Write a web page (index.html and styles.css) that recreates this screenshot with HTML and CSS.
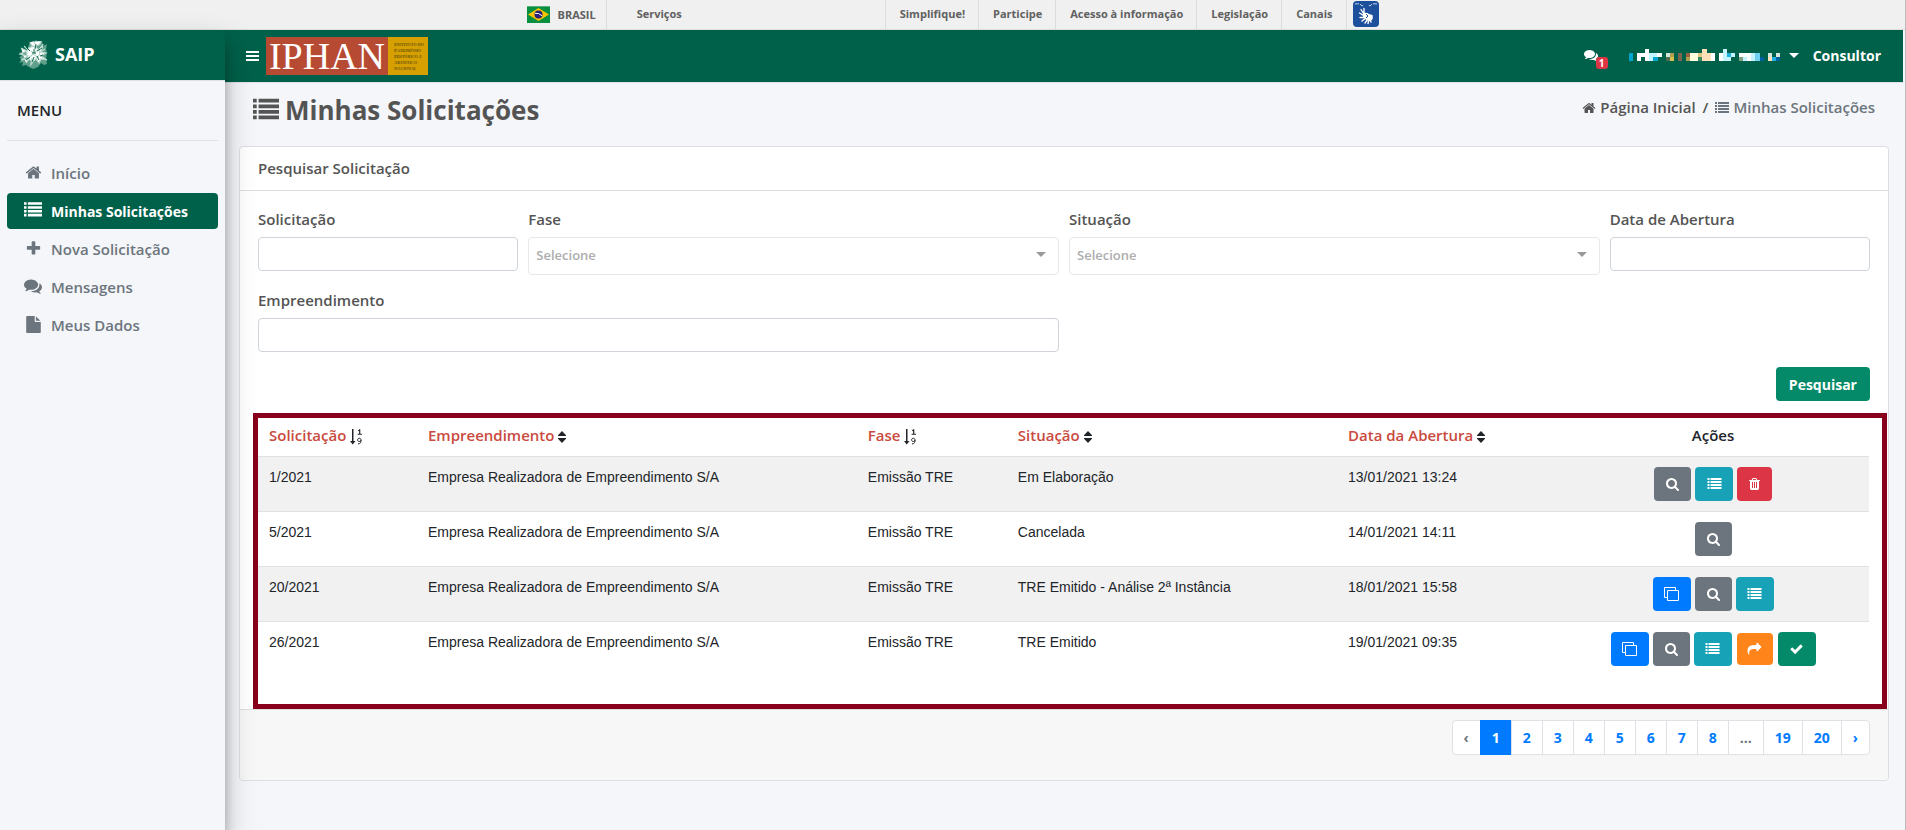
FILE: index.html
```html
<!DOCTYPE html>
<html lang="pt-BR">
<head>
<meta charset="utf-8">
<title>SAIP - Minhas Solicitações</title>
<link rel="stylesheet" href="styles.css">
</head>
<body>
<svg class="sprite" aria-hidden="true">
  <symbol id="i-list" viewBox="0 0 1792 1792"><path d="M0 1280h256v256H0zM0 896h256v256H0zM0 512h256v256H0zM0 128h256v256H0zM384 1280h1408v256H384zM384 896h1408v256H384zM384 512h1408v256H384zM384 128h1408v256H384z"/></symbol>
  <symbol id="i-home" viewBox="0 0 1792 1792"><path d="M1472 992v480q0 26-19 45t-45 19h-384v-384h-256v384h-384q-26 0-45-19t-19-45v-480q0-1 .5-3t.5-3l575-474 575 474q1 2 1 6zm223-69l-62 74q-8 9-21 11h-3q-13 0-21-7l-692-577-692 577q-12 8-24 7-13-2-21-11l-62-74q-8-10-7-23.500t11-21.500l719-599q32-26 76-26t76 26l244 204v-195q0-14 9-23t23-9h192q14 0 23 9t9 23v408l219 182q10 8 11 21.500t-7 23.500z"/></symbol>
  <symbol id="i-plus" viewBox="0 0 1792 1792"><path d="M1600 736v192q0 40-28 68t-68 28h-416v416q0 40-28 68t-68 28h-192q-40 0-68-28t-28-68v-416h-416q-40 0-68-28t-28-68v-192q0-40 28-68t68-28h416v-416q0-40 28-68t68-28h192q40 0 68 28t28 68v416h416q40 0 68 28t28 68z"/></symbol>
  <symbol id="i-comments" viewBox="0 0 1792 1792"><path d="M1408 768q0 139-94 257t-256.500 186.500-353.500 68.500q-86 0-176-16-124 88-278 128-36 9-86 16h-3q-11 0-20.500-8t-11.500-21q-1-3-1-6.500t.5-6.500 2-6l2.500-5 3.500-5.500 4-5 4.500-5 4-4.500q5-6 23-25t26-29.500 22.500-29 25-38.500 20.500-44q-124-72-195-177t-71-224q0-139 94-257t256.500-186.500 353.500-68.500 353.500 68.500 256.500 186.500 94 257zm384 256q0 120-71 224.500t-195 176.500q10 24 20.500 44t25 38.500 22.500 29 26 29.500 23 25q1 1 4 4.500t4.500 5 4 5 3.500 5.500l2.500 5 2 6 .5 6.500-1 6.500q-3 14-13 22t-22 7q-50-7-86-16-154-40-278-128-90 16-176 16-271 0-472-132 58 4 88 4 161 0 309-45t264-129q125-92 192-212t67-254q0-77-23-152 129 71 204 178t75 230z"/></symbol>
  <symbol id="i-file" viewBox="0 0 1792 1792"><path d="M1152 512v-472q22 14 36 28l408 408q14 14 28 36h-472zm-128 32q0 40 28 68t68 28h544v1056q0 40-28 68t-68 28h-1344q-40 0-68-28t-28-68v-1600q0-40 28-68t68-28h800v544z"/></symbol>
  <symbol id="i-search" viewBox="0 0 1792 1792"><path d="M1216 832q0-185-131.500-316.500t-316.500-131.500-316.500 131.500-131.500 316.500 131.500 316.500 316.500 131.500 316.500-131.500 131.500-316.500zm512 832q0 52-38 90t-90 38q-54 0-90-38l-343-342q-179 124-399 124-143 0-273.500-55.500t-225-150-150-225-55.500-273.500 55.500-273.500 150-225 225-150 273.500-55.500 273.500 55.500 225 150 150 225 55.500 273.500q0 220-124 399l343 343q37 37 37 90z"/></symbol>
  <symbol id="i-trash" viewBox="0 0 1792 1792"><path d="M704 1376v-704q0-14-9-23t-23-9h-64q-14 0-23 9t-9 23v704q0 14 9 23t23 9h64q14 0 23-9t9-23zm256 0v-704q0-14-9-23t-23-9h-64q-14 0-23 9t-9 23v704q0 14 9 23t23 9h64q14 0 23-9t9-23zm256 0v-704q0-14-9-23t-23-9h-64q-14 0-23 9t-9 23v704q0 14 9 23t23 9h64q14 0 23-9t9-23zm-544-992h448l-48-117q-7-9-17-11h-317q-10 2-17 11zm928 32v64q0 14-9 23t-23 9h-96v948q0 83-47 143.500t-113 60.500h-832q-66 0-113-58.500t-47-141.500v-952h-96q-14 0-23-9t-9-23v-64q0-14 9-23t23-9h309l70-167q15-37 54-63t79-26h320q40 0 79 26t54 63l70 167h309q14 0 23 9t9 23z"/></symbol>
  <symbol id="i-check" viewBox="0 0 1792 1792"><path d="M1671 566q0 40-28 68l-724 724-136 136q-28 28-68 28t-68-28l-136-136-362-362q-28-28-28-68t28-68l136-136q28-28 68-28t68 28l294 295 656-657q28-28 68-28t68 28l136 136q28 28 28 68z"/></symbol>
  <symbol id="i-share" viewBox="0 0 1792 1792"><path d="M1792 640q0 26-19 45l-512 512q-19 19-45 19t-45-19-19-45v-256h-224q-98 0-175.500 6t-154 21.500-133 42.500-105.500 69.500-80 101-48.500 138.500-17.500 181q0 55 5 123 0 6 2.500 23.500t2.500 26.500q0 15-8.500 25t-23.500 10q-16 0-28-17-7-9-13-22t-13.500-30-10.500-24q-127-285-127-451 0-199 53-333 162-403 875-403h224v-256q0-26 19-45t45-19 45 19l512 512q19 19 19 45z"/></symbol>
  <symbol id="i-copy" viewBox="0 0 15 14"><path d="M3 10.500H.5V.5h11V3M3.500 3.500h11v10h-11z" fill="none" stroke="currentColor"/></symbol>
  <symbol id="i-sort" viewBox="0 0 8 12"><path d="M4 0l4 4.200v.8H0v-.8zM4 12l4-4.200V7H0v.8z"/></symbol>
  <symbol id="i-sortnum" viewBox="0 0 12 16"><path d="M2 0h1.500v12H5.500L2.700 15.500 0 12h2zM8 1.400L9.300.3h1v4.400H12v1H7.600v-1h1.500V1.700l-1 .6z"/><path d="M11 11.200a1.700 1.700 0 1 1 0-.6c.3 2.600-.6 4.400-3 4.300" fill="none" stroke="currentColor"/></symbol>
</svg>

<header class="gov">
  <nav class="gov-inner" aria-label="Portal do governo">
    <a class="gov-brasil" href="#"><svg width="23" height="17" viewBox="0 0 23 17"><path fill="#089040" d="M0 0h23v17H0z"/><path fill="#52b27a" d="M0 0h23v1H0z"/><path fill="#f8c300" d="M11.500 2L22 8.500 11.500 15 1 8.500z"/><circle cx="11.500" cy="8.500" r="4" fill="#2b2278"/><path d="M8 7.300q4-.6 7 2.500" fill="none" stroke="#fff"/></svg>BRASIL</a>
    <a class="gov-serv" href="#">Serviços</a>
    <a href="#">Simplifique!</a>
    <a href="#">Participe</a>
    <a href="#">Acesso à informação</a>
    <a href="#">Legislação</a>
    <a href="#">Canais</a>
    <button class="libras" aria-label="Acessível em Libras"><svg width="26" height="26" viewBox="0 0 26 26"><rect width="26" height="26" rx="4" fill="#1c4f9c"/><path d="M2 3q5-1 7 2l2-1M24 3q-5-1-7 2l-2-1" fill="none" stroke="#c8d8ef" stroke-dasharray="4 1"/><path d="M8 8.500l2.500 4M6.500 12l4 2.500M7 16.500h4M11 7.500v5M9 20l4-3M12 22l3-4M15 22.500l1-4M18 21l-1-3" stroke="#fff" stroke-width="1.400" stroke-linecap="round"/><path d="M10 12q4-1 6 1l3.500 1q1 3-.5 5-3 2-7-1-3-2-2-6z" fill="#fff"/><path d="M13 13l2 2-2 2" stroke="#1c4f9c" fill="none"/></svg></button>
  </nav>
</header>

<div class="app">
  <aside class="side">
    <a class="brand" href="#">
      <svg width="30" height="30" viewBox="0 0 30 30" fill="none" stroke="#b9d8cd"><path fill="#5f9f8b" stroke="none" d="M12 3l3 2 3-4 3 3 3-2 1 5 4-2-1 5 1 4-1 5 1 6-3 1-3-2-3 4-5 2-4-2-3-2-4 1 1-4-4 1 3-4-3-1 3-3-3-3 5 1-2-4 5 1z"/><path stroke-width="1.200" d="M12 3q1 5 6 4t5-5M3 9l6 3-7 3 8 2-7 4 8-1-3 4M25 5l-2 8 5 1-5 3 6 4-6-1-2 4-3-4-5 4 1-5M11 9q5-3 9 1t-1 9-8 1-2-8zM13 12l6 6M19 11l-7 7M15 2l2 3M6 7l3 3M27 10l-3 2M12 27l3-4"/><path stroke="#146b50" d="M8 8l4 4M18 5l-1 5M24 9l-5 3M8 21l4-3M21 21l-2-4M14 23l2-5M14 14h4M16 10v4M25 16l-3 1"/></svg>
      <span>SAIP</span>
    </a>
    <div class="menu-title">MENU</div>
    <nav class="menu" aria-label="Menu">
      <a href="#"><svg class="ic16"><use href="#i-home"/></svg>Início</a>
      <a href="#" class="active"><svg class="ic18"><use href="#i-list"/></svg>Minhas Solicitações</a>
      <a href="#"><svg class="ic16"><use href="#i-plus"/></svg>Nova Solicitação</a>
      <a href="#"><svg class="ic18"><use href="#i-comments"/></svg>Mensagens</a>
      <a href="#"><svg class="ic16"><use href="#i-file"/></svg>Meus Dados</a>
    </nav>
  </aside>

  <div class="main">
    <header class="topbar">
      <button class="burger" aria-label="Abrir menu"><svg width="13" height="10" viewBox="0 0 13 10"><path fill="#fff" d="M0 0h13v2H0zM0 4h13v2H0zM0 8h13v2H0z"/></svg></button>
      <a class="iphan" href="#"><span class="iphan-name">IPHAN</span><span class="iphan-full">Instituto do<br>Patrimônio<br>Histórico e<br>Artístico<br>Nacional</span></a>
      <div class="user">
        <a class="msgs" href="#" aria-label="Mensagens"><svg class="ic14"><use href="#i-comments"/></svg><span class="badge">1</span></a>
        <button class="usermenu" aria-label="Menu do usuário">
          <svg width="152" height="12" viewBox="0 0 152 12" shape-rendering="crispEdges"><path fill="#00a5d0" d="M0 4h4v8H0zM24 8h5v4h-5z"/><path fill="#fff" d="M8 4h4v8H8zM12 4h4v4h-4zM16 0h4v12h-4zM28 4h5v4h-5zM82 4h4v8h-4zM90 4h4v8h-4zM110 4h8v4h-8zM118 4h4v8h-4z"/><path fill="#c4f4ff" d="M20 4h4v8h-4zM24 4h4v4h-4zM94 0h4v12h-4zM98 8h4v4h-4zM102 4h4v4h-4zM114 8h4v4h-4zM122 4h4v8h-4z"/><path fill="#d8e4de" d="M37 4h4v4h-4zM139 4h4v4h-4zM147 4h4v4h-4z"/><path fill="#4f6b50" d="M37 8h4v4h-4z"/><path fill="#b0a050" d="M41 4h4v4h-4zM57 8h4v4h-4z"/><path fill="#d8c050" d="M41 8h4v4h-4z"/><path fill="#7a6550" d="M49 4h4v8h-4z"/><path fill="#a06040" d="M57 4h4v4h-4z"/><path fill="#ffffe0" d="M61 4h8v8h-8z"/><path fill="#e0c880" d="M69 4h4v4h-4z"/><path fill="#3a8a60" d="M69 8h4v4h-4z"/><path fill="#ffe0b8" d="M73 0h5v12h-5zM78 4h4v8h-4zM139 8h4v4h-4z"/><path fill="#20b0e0" d="M98 4h4v4h-4zM143 8h4v4h-4z"/><path fill="#80a080" d="M110 8h4v4h-4z"/><path fill="#70d0f0" d="M126 4h5v8h-5z"/><path fill="#005f9f" d="M131 8h4v4h-4zM147 8h4v4h-4z"/></svg>
          <span class="caret"></span>
        </button>
        <span>Consultor</span>
      </div>
    </header>

    <div class="pagehead">
      <h1><svg class="ic26"><use href="#i-list"/></svg>Minhas Solicitações</h1>
      <nav class="crumbs" aria-label="Trilha">
        <a href="#"><svg class="ic14"><use href="#i-home"/></svg>Página Inicial</a><span>/</span><span class="here"><svg class="ic14"><use href="#i-list"/></svg>Minhas Solicitações</span>
      </nav>
    </div>

    <section class="card">
      <h2>Pesquisar Solicitação</h2>
      <div class="body">
        <form>
          <div class="c2"><label for="f1">Solicitação</label><input id="f1" type="text"></div>
          <div class="c4"><label for="f2">Fase</label><div class="sel"><select id="f2"><option>Selecione</option></select></div></div>
          <div class="c4"><label for="f3">Situação</label><div class="sel"><select id="f3"><option>Selecione</option></select></div></div>
          <div class="c2"><label for="f4">Data de Abertura</label><input id="f4" type="text"></div>
          <div class="c6"><label for="f5">Empreendimento</label><input id="f5" type="text"></div>
          <div class="submit"><button type="button">Pesquisar</button></div>
        </form>
        <div class="frame">
          <table>
            <colgroup><col class="k1"><col class="k2"><col class="k3"><col class="k4"><col class="k5"><col class="k6"></colgroup>
            <thead><tr>
              <th><a href="#">Solicitação</a><svg class="sn"><use href="#i-sortnum"/></svg></th>
              <th><a href="#">Empreendimento</a><svg class="so"><use href="#i-sort"/></svg></th>
              <th><a href="#">Fase</a><svg class="sn"><use href="#i-sortnum"/></svg></th>
              <th><a href="#">Situação</a><svg class="so"><use href="#i-sort"/></svg></th>
              <th><a href="#">Data da Abertura</a><svg class="so"><use href="#i-sort"/></svg></th>
              <th class="mid">Ações</th>
            </tr></thead>
            <tbody>
              <tr><td>1/2021</td><td>Empresa Realizadora de Empreendimento S/A</td><td>Emissão TRE</td><td>Em Elaboração</td><td>13/01/2021 13:24</td>
                <td><div class="acts"><button class="grey" aria-label="Visualizar"><svg><use href="#i-search"/></svg></button><button class="teal" aria-label="Detalhes"><svg><use href="#i-list"/></svg></button><button class="red" aria-label="Excluir"><svg><use href="#i-trash"/></svg></button></div></td></tr>
              <tr><td>5/2021</td><td>Empresa Realizadora de Empreendimento S/A</td><td>Emissão TRE</td><td>Cancelada</td><td>14/01/2021 14:11</td>
                <td><div class="acts"><button class="grey" aria-label="Visualizar"><svg><use href="#i-search"/></svg></button></div></td></tr>
              <tr><td>20/2021</td><td>Empresa Realizadora de Empreendimento S/A</td><td>Emissão TRE</td><td>TRE Emitido - Análise 2ª Instância</td><td>18/01/2021 15:58</td>
                <td><div class="acts"><button class="blue" aria-label="Copiar"><svg><use href="#i-copy"/></svg></button><button class="grey" aria-label="Visualizar"><svg><use href="#i-search"/></svg></button><button class="teal" aria-label="Detalhes"><svg><use href="#i-list"/></svg></button></div></td></tr>
              <tr><td>26/2021</td><td>Empresa Realizadora de Empreendimento S/A</td><td>Emissão TRE</td><td>TRE Emitido</td><td>19/01/2021 09:35</td>
                <td><div class="acts"><button class="blue" aria-label="Copiar"><svg><use href="#i-copy"/></svg></button><button class="grey" aria-label="Visualizar"><svg><use href="#i-search"/></svg></button><button class="teal" aria-label="Detalhes"><svg><use href="#i-list"/></svg></button><button class="orange" aria-label="Encaminhar"><svg><use href="#i-share"/></svg></button><button class="green" aria-label="Confirmar"><svg><use href="#i-check"/></svg></button></div></td></tr>
            </tbody>
          </table>
        </div>
      </div>
      <footer class="foot">
        <nav class="pages" aria-label="Paginação"><span>‹</span><a class="on" href="#">1</a><a href="#">2</a><a href="#">3</a><a href="#">4</a><a href="#">5</a><a href="#">6</a><a href="#">7</a><a href="#">8</a><span>...</span><a href="#">19</a><a href="#">20</a><a href="#">›</a></nav>
      </footer>
    </section>
  </div>
</div>
</body>
</html>
```

FILE: styles.css
```css
* { box-sizing: border-box; }
html { height: 100%; }
body {
  margin: 0;
  min-height: 100%;
  display: flex;
  flex-direction: column;
  padding-right: 2px;
  border-right: 1px solid #bcbcbc;
  background: #f4f6f9;
  color: #212529;
  font: 600 15px/21px "Open Sans", "Noto Sans", sans-serif;
}
a { color: inherit; text-decoration: none; }
button { border: 0; padding: 0; margin: 0; font: inherit; color: inherit; background: none; }
svg { fill: currentColor; flex: none; }
.sprite { position: absolute; width: 0; height: 0; }
.ic14 { width: 14px; height: 14px; }
.ic16 { width: 17px; height: 17px; }
.ic18 { width: 18px; height: 18px; }
.ic26 { width: 26px; height: 26px; }

.gov { height: 30px; background: #f0f0f0; border-bottom: 1px solid #dcdcdc; color: #606060; font-size: 11px; font-weight: 700; margin-right: -2px; }
.gov-inner { display: flex; width: 852px; height: 29px; margin: 0 auto; }
.gov-inner a { display: flex; align-items: center; padding: 0 13px 2px 14px; border-left: 1px solid #dcdcdc; }
.gov-inner .gov-brasil { gap: 8px; padding: 0 10px 0 0; border: 0; }
.gov-inner .gov-serv { flex: 1; padding-left: 30px; }
.libras { display: flex; padding: 1px 0 0 6px; border-left: 1px solid #dcdcdc; }

.app { flex: 1; display: flex; }
.side {
  position: relative;
  z-index: 2;
  width: 225px;
  flex: none;
  background: #f4f6f9;
  box-shadow: 0 14px 28px rgba(0, 0, 0, .25), 0 10px 10px rgba(0, 0, 0, .22);
}
.brand { display: flex; align-items: center; gap: 7px; height: 51px; padding: 0 0 2px 18px; background: #00614a; border-bottom: 1px solid #dee2e6; color: #fff; font-size: 18px; font-weight: 700; }
.menu-title { margin: 0 7px 14px; padding: 19px 10px 19px; border-bottom: 1px solid #dee2e6; }
.menu { display: flex; flex-direction: column; gap: 2px; padding: 0 7px; color: #6c757d; }
.menu a { display: grid; grid-template-columns: 20px 1fr; column-gap: 8px; align-items: center; height: 36px; padding-left: 16px; border-radius: 4px; }
.menu a svg { justify-self: center; margin-bottom: 2px; }
.menu .active { background: #00614a; color: #fff; font-size: 14px; font-weight: 700; }

.main { flex: 1; min-width: 0; }
.topbar { display: flex; align-items: center; height: 53px; padding: 0 22px 0 21px; background: #00614a; border-bottom: 1px solid #dee2e6; color: #fff; font-size: 14px; font-weight: 700; }
.burger { display: flex; margin-right: 7px; }
.iphan { display: flex; height: 38px; background: #b74a32; }
.iphan-name { width: 122px; text-align: center; font: 400 38px/38px "Liberation Serif", serif; }
.iphan-full { width: 40px; padding: 5px 0 0 6px; background: #d6a000; color: #6b5410; font: 700 5px/6px "Liberation Serif", serif; font-variant: small-caps; white-space: nowrap; }
.user { display: flex; align-items: center; margin-left: auto; padding-bottom: 2px; }
.msgs { position: relative; display: flex; margin-right: 31px; }
.badge { position: absolute; left: 12px; top: 9px; width: 12px; height: 12px; border-radius: 3px; background: #dc3545; font-size: 10px; font-weight: 700; line-height: 12px; text-align: center; }
.usermenu { display: flex; align-items: center; gap: 8px; margin-right: 14px; }
.caret { border: 5px solid transparent; border-top-color: #fff; border-bottom: 0; }

.pagehead { display: flex; justify-content: space-between; align-items: flex-start; height: 63px; padding: 9px 28px 0; color: #545454; }
h1 { display: flex; align-items: center; gap: 6px; margin: 0; font-size: 26px; line-height: 36px; font-weight: 700; }
.crumbs { display: flex; gap: 7px; padding-top: 5px; }
.crumbs a, .here { display: flex; align-items: center; gap: 4px; }
.here { color: #6c757d; }

.card { margin: 0 14px 0 14px; background: #fff; border: 1px solid #dcdee0; border-radius: 4px; }
h2 { margin: 0; padding: 11px 18px; border-bottom: 1px solid #dcdee0; font-size: 15px; line-height: 21px; font-weight: 600; color: #545454; }
.body { padding: 18px 18px 0; }
form { display: grid; grid-template-columns: repeat(12, 1fr); gap: 15px 10px; }
.c2 { grid-column: span 2; }
.c4 { grid-column: span 4; }
.c6 { grid-column: span 6; }
label { display: block; margin-bottom: 7px; color: #545454; }
input { display: block; width: 100%; height: 34px; border: 1px solid #ced4da; border-radius: 4px; background: #fff; font: inherit; }
.sel { position: relative; }
.sel::after { content: ""; position: absolute; right: 13px; top: 15px; border: 5px solid transparent; border-top-color: #999; border-bottom: 0; }
select { display: block; appearance: none; width: 100%; height: 38px; padding: 0 7px 2px; border: 1px solid #e8e8e8; border-radius: 4px; background: #fff; font: inherit; font-size: 13px; color: #adadad; }
.submit { grid-column: 1 / -1; display: flex; justify-content: flex-end; }
.submit button { height: 34px; padding: 0 13px; border-radius: 4px; background: #048a68; color: #fff; font-size: 14px; font-weight: 700; }

.frame { margin: 12px -17px 0 -5px; padding: 0 13px 28px 0; border: 5px solid #88001b; }
table { width: 100%; border-collapse: collapse; table-layout: fixed; font: 400 14px/21px "Liberation Sans", Arial, sans-serif; }
.k1 { width: 159px; }
.k2 { width: 27.3%; }
.k3 { width: 150px; }
.k4 { width: 20.5%; }
.k5 { width: 220px; }
th { height: 38px; padding: 0 11px 3px; text-align: left; white-space: nowrap; font: 600 15px/21px "Open Sans", sans-serif; }
th a { color: #c94a3e; }
.mid { text-align: center; }
td { height: 55px; padding: 10px 11px 0; border-top: 1px solid #dee2e6; vertical-align: top; white-space: nowrap; }
tbody tr:nth-child(odd) { background: #f1f1f1; }
.sn, .so { margin-left: 4px; vertical-align: middle; color: #212529; }
.sn { width: 12px; height: 16px; }
.so { width: 8px; height: 12px; }
.acts { display: flex; justify-content: center; align-items: center; gap: 4px; }
.acts button { display: flex; align-items: center; justify-content: center; width: 38px; height: 34px; border-radius: 4px; color: #fff; }
.acts svg { width: 15px; height: 14px; }
.acts .grey { width: 37px; background: #6c757d; }
.acts .teal { background: #18a2b8; }
.acts .red { width: 35px; background: #dc3545; }
.acts .blue { background: #007bff; }
.acts .orange { width: 36px; height: 32px; margin: 0 1px; background: #ff851b; }
.acts .green { background: #048a68; }

.foot { padding: 10px 18px 25px; border-top: 1px solid #dcdee0; background: #f7f7f7; border-radius: 0 0 4px 4px; }
.pages { display: flex; justify-content: flex-end; font-size: 14px; font-weight: 700; color: #6c757d; }
.pages a, .pages span { height: 35px; padding: 0 11px; margin-left: -1px; border: 1px solid #dee2e6; background: #fff; line-height: 33px; }
.pages a { color: #007bff; }
.pages .on { background: #007bff; border-color: #007bff; color: #fff; }
.pages :first-child { border-radius: 4px 0 0 4px; }
.pages :last-child { border-radius: 0 4px 4px 0; }
```
